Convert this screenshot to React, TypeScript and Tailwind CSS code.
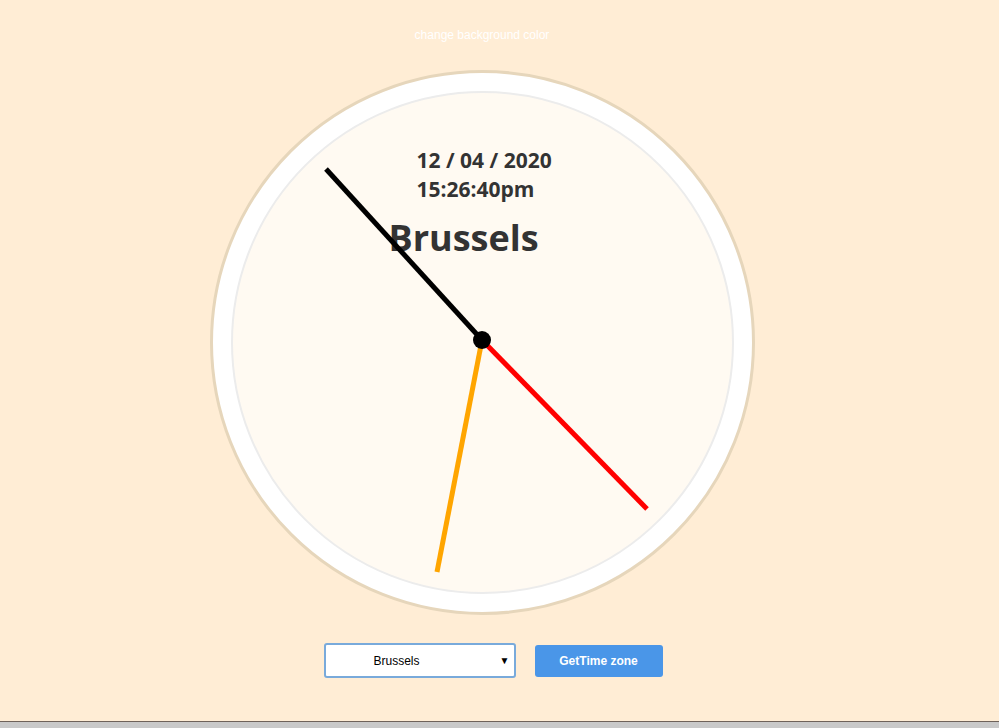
import React from "react";

export default function App() {
  return (
    <div className="w-[999px] h-[728px] bg-[#ffedd5] flex flex-col overflow-hidden" style={{ fontFamily: "Arial, 'Liberation Sans', sans-serif" }}>
      <div className="w-[964px] flex flex-col items-center">
        <div className="pt-[29px] text-[12px] leading-[12px] text-white" style={{ fontFamily: "'Liberation Sans', Arial, sans-serif" }}>
          change background color
        </div>
        <div className="relative mt-[29px] w-[545px] h-[545px] rounded-full border-[3px] border-[#e6d6bb] bg-white p-[18px]">
          <div className="w-full h-full rounded-full border-2 border-[#ececec] bg-[#fffaf2] flex flex-col pl-[184px] pt-[53px]" style={{ fontFamily: "'Open Sans', sans-serif" }}>
            <div className="text-[21px] leading-[29px] font-bold text-[#333333]">12 / 04 / 2020</div>
            <div className="text-[21px] leading-[29px] font-bold text-[#333333]">15:26:40pm</div>
            <div className="-ml-[28px] mt-[12px] text-[36px] leading-[44px] font-bold text-[#333333]">Brussels</div>
          </div>
          <svg className="absolute left-[-3px] top-[-3px]" width="545" height="545" viewBox="0 0 545 545">
            <line x1="272" y1="270" x2="116" y2="99" stroke="#000" strokeWidth="5" />
            <line x1="272" y1="270" x2="437" y2="439" stroke="#f00" strokeWidth="5" />
            <line x1="272" y1="270" x2="227" y2="502" stroke="#ffa500" strokeWidth="5" />
            <circle cx="272" cy="270" r="9" fill="#000" />
          </svg>
        </div>
        <div className="mt-[28px] ml-[22px] flex items-center gap-[19px]">
          <div className="relative w-[192px] h-[35px] border-2 border-[#79aadb] rounded-[3px] bg-white flex items-center justify-center pr-[46px] text-[12px] text-black">
            Brussels
            <span className="absolute right-[4px] top-[10px] text-[10px] leading-[12px]">▼</span>
          </div>
          <div className="w-[128px] h-[32px] bg-[#4a96e8] rounded-[3px] flex items-center justify-center text-[12px] font-bold text-white">
            GetTime zone
          </div>
        </div>
      </div>
      <div className="flex-1" />
      <div className="h-[1px] bg-[#6e625a]" />
      <div className="h-[6px] bg-[#c9c9c9]" />
    </div>
  );
}
